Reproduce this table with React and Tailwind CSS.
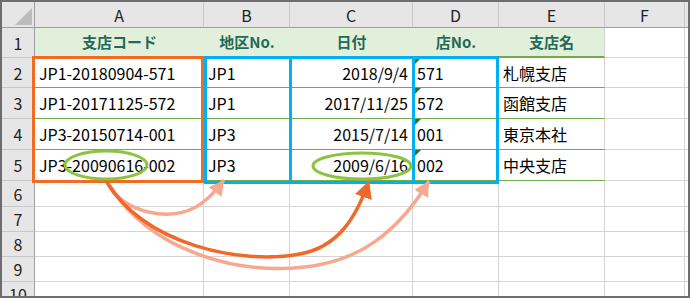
import React from 'react';

const colW = ['w-[169px]', 'w-[86px]', 'w-[123px]', 'w-[86px]', 'w-[106px]', 'w-[80px]'];
const letters = ['A', 'B', 'C', 'D', 'E', 'F'];
const rowH = ['h-[30px]', 'h-[30px]', 'h-[31px]', 'h-[31px]', 'h-[31px]'];
const emptyH = ['h-[26px]', 'h-[25px]', 'h-[25px]', 'h-[25px]'];

const headers = ['支店コード', '地区No.', '日付', '店No.', '支店名'];

const rows = [
  ['JP1-20180904-571', 'JP1', '2018/9/4', '571', '札幌支店'],
  ['JP1-20171125-572', 'JP1', '2017/11/25', '572', '函館支店'],
  ['JP3-20150714-001', 'JP3', '2015/7/14', '001', '東京本社'],
  ['JP3-20090616-002', 'JP3', '2009/6/16', '002', '中央支店'],
];

const RowNum = ({ n, h }) => (
  <div className={`${h} w-[33px] shrink-0 flex items-center justify-center bg-[#e6e6e6] border-r border-r-[#9e9e9e] border-b border-b-[#c8c8c8] text-[16px] text-[#222]`}>
    {n}
  </div>
);

const Annotations = () => (
  <svg className="absolute left-0 top-0 pointer-events-none" width="690" height="298" viewBox="0 0 690 298">
    <defs>
      <marker id="headDark" markerUnits="userSpaceOnUse" markerWidth="22" markerHeight="22" refX="17" refY="9" orient="auto">
        <path d="M0,0 L17,9 L0,18 Z" fill="#f0682a" />
      </marker>
      <marker id="headLight" markerUnits="userSpaceOnUse" markerWidth="20" markerHeight="20" refX="15" refY="8" orient="auto">
        <path d="M0,0 L15,8 L0,16 Z" fill="#f6a98e" />
      </marker>
    </defs>
    {/* light arrows go under the dark one */}
    <path d="M110,186 C150,250 235,275 305,267 C360,261 398,232 429,181" fill="none" stroke="#f6a98e" strokeWidth="3.5" markerEnd="url(#headLight)" />
    <path d="M110,187 C126,212 168,222 196,207 C208,200 216,191 224,180" fill="none" stroke="#f6a98e" strokeWidth="3.5" markerEnd="url(#headLight)" />
    <path d="M106,181 C145,245 240,265 300,254 C338,247 356,218 369,181" fill="none" stroke="#f0682a" strokeWidth="3.5" markerEnd="url(#headDark)" />
    <ellipse cx="106" cy="165" rx="41" ry="14" fill="none" stroke="#8cc43f" strokeWidth="3" />
    <ellipse cx="362" cy="166" rx="49" ry="13" fill="none" stroke="#8cc43f" strokeWidth="3" />
  </svg>
);

export default function App() {
  return (
    <div className="relative w-[690px] h-[298px] bg-white font-['Noto_Sans_CJK_JP',sans-serif] overflow-hidden">
      <div className="w-[690px] h-[298px] border-2 border-[#6e6e6e] flex flex-col overflow-hidden">
        {/* column letters */}
        <div className="flex h-[26px] shrink-0">
          <div className="w-[33px] shrink-0 bg-[#e6e6e6] border-r border-r-[#9e9e9e] border-b border-b-[#9e9e9e] flex items-end justify-end pr-[2px] pb-[2px]">
            <div className="w-0 h-0 border-l-[17px] border-l-transparent border-b-[17px] border-b-[#bcbcbc]" />
          </div>
          {colW.map((w, i) => (
            <div key={i} className={`${w} shrink-0 bg-[#e6e6e6] border-r border-r-[#c8c8c8] border-b border-b-[#9e9e9e] flex items-center justify-center text-[16px] text-[#222]`}>
              {letters[i]}
            </div>
          ))}
          <div className="flex-1 bg-[#e6e6e6] border-b border-b-[#9e9e9e]" />
        </div>

        {/* table header row */}
        <div className="flex shrink-0">
          <RowNum n={1} h={rowH[0]} />
          {headers.map((t, i) => (
            <div key={i} className={`${colW[i]} ${rowH[0]} shrink-0 bg-[#e2efda] border-b-2 border-b-[#70ad47] flex items-center justify-center text-[15px] font-bold text-[#1f6b57] ${i === 4 ? 'border-r border-r-[#d4d4d4]' : ''}`}>
              {t}
            </div>
          ))}
          <div className={`${colW[5]} ${rowH[0]} shrink-0 border-r border-b border-[#d4d4d4]`} />
          <div className={`flex-1 ${rowH[0]} border-b border-[#d4d4d4]`} />
        </div>

        {/* data rows */}
        {rows.map((r, ri) => (
          <div key={ri} className="flex shrink-0">
            <RowNum n={ri + 2} h={rowH[ri + 1]} />
            {r.map((t, i) => (
              <div
                key={i}
                className={`${colW[i]} ${rowH[ri + 1]} relative shrink-0 border-b border-b-[#70ad47] flex items-center text-[16px] text-black whitespace-nowrap ${i === 2 ? 'justify-end pr-[5px]' : 'pl-[4px]'} ${i === 4 ? 'border-r border-r-[#d4d4d4]' : ''}`}
              >
                {i === 3 && (
                  <span className="absolute left-[2px] top-0 w-0 h-0 border-t-[6px] border-t-[#1e7b34] border-r-[6px] border-r-transparent" />
                )}
                {t}
              </div>
            ))}
            <div className={`${colW[5]} ${rowH[ri + 1]} shrink-0 border-r border-b border-[#d4d4d4]`} />
            <div className={`flex-1 ${rowH[ri + 1]} border-b border-[#d4d4d4]`} />
          </div>
        ))}

        {/* empty rows */}
        {[6, 7, 8, 9, 10].map((n, k) => {
          const h = k < 4 ? emptyH[k] : 'h-[25px]';
          return (
            <div key={n} className="flex shrink-0">
              <RowNum n={n} h={h} />
              {colW.map((w, i) => (
                <div key={i} className={`${w} ${h} shrink-0 border-r border-b border-[#d4d4d4]`} />
              ))}
              <div className={`flex-1 ${h} border-b border-[#d4d4d4]`} />
            </div>
          );
        })}
      </div>

      {/* range outlines */}
      <div className="absolute left-[32px] top-[56px] w-[172px] h-[127px] border-[3px] border-[#f26b21]" />
      <div className="absolute left-[204px] top-[56px] w-[88px] h-[128px] border-[3px] border-[#00b0f0]" />
      <div className="absolute left-[289px] top-[56px] w-[126px] h-[128px] border-[3px] border-[#00b0f0]" />
      <div className="absolute left-[412px] top-[56px] w-[87px] h-[128px] border-[3px] border-[#00b0f0]" />

      <Annotations />
    </div>
  );
}
